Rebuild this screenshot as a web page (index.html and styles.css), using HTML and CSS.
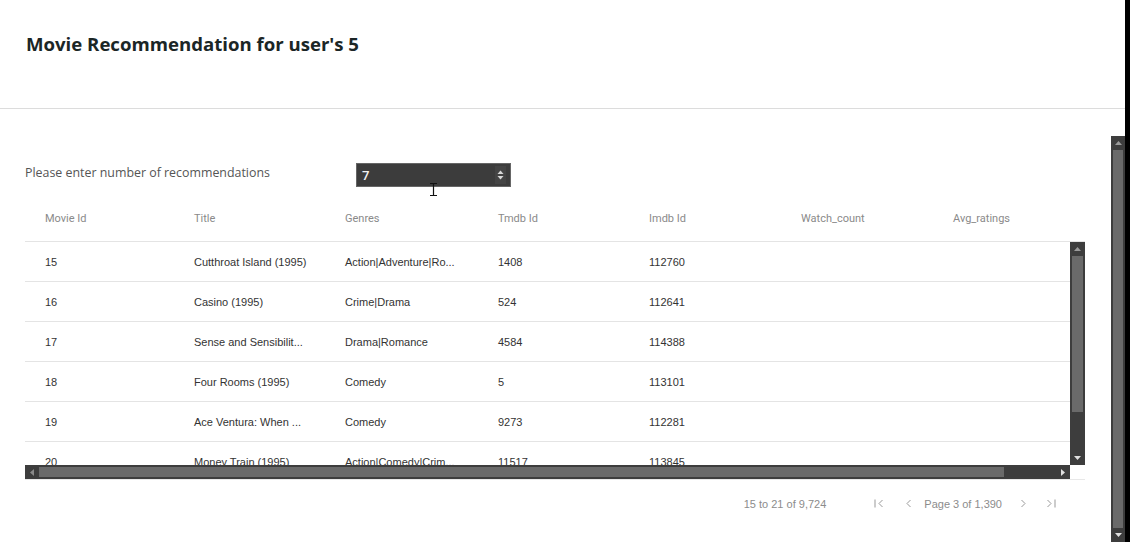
FILE: index.html
```html
<!DOCTYPE html>
<html>
<head>
<meta charset="utf-8">
<link rel="stylesheet" href="styles.css">
</head>
<body>
<div class="window">
  <div class="main">
    <header class="page-head">
      <h1 class="title">Movie Recommendation for user's 5</h1>
    </header>
    <div class="content-wrap">
      <div class="content">
        <div class="form-row">
          <label class="form-label">Please enter number of recommendations</label>
          <div class="num-input">
            <span class="num-value">7</span>
            <span class="spin">
              <svg width="7" height="12" viewBox="0 0 7 12"><path d="M3.5 1.5 L6.5 5 H0.5 Z" fill="#d8d8d8"/><path d="M3.5 10.5 L6.5 7 H0.5 Z" fill="#d8d8d8"/></svg>
            </span>
            <svg class="ibeam" width="9" height="15" viewBox="0 0 9 15"><path d="M1 1.5 H8 M4.5 1.5 V13.5 M1 13.5 H8" stroke="#111" stroke-width="1.2" fill="none"/></svg>
          </div>
        </div>

        <div class="grid">
          <div class="grid-head">
            <div class="hcell">Movie Id</div>
            <div class="hcell">Title</div>
            <div class="hcell">Genres</div>
            <div class="hcell">Tmdb Id</div>
            <div class="hcell">Imdb Id</div>
            <div class="hcell">Watch_count</div>
            <div class="hcell">Avg_ratings</div>
          </div>
          <div class="grid-body">
            <div class="viewport">
              <div class="rows">
                <div class="row"><div class="cell">15</div><div class="cell">Cutthroat Island (1995)</div><div class="cell">Action|Adventure|Ro...</div><div class="cell">1408</div><div class="cell">112760</div><div class="cell"></div><div class="cell"></div></div>
                <div class="row"><div class="cell">16</div><div class="cell">Casino (1995)</div><div class="cell">Crime|Drama</div><div class="cell">524</div><div class="cell">112641</div><div class="cell"></div><div class="cell"></div></div>
                <div class="row"><div class="cell">17</div><div class="cell">Sense and Sensibilit...</div><div class="cell">Drama|Romance</div><div class="cell">4584</div><div class="cell">114388</div><div class="cell"></div><div class="cell"></div></div>
                <div class="row"><div class="cell">18</div><div class="cell">Four Rooms (1995)</div><div class="cell">Comedy</div><div class="cell">5</div><div class="cell">113101</div><div class="cell"></div><div class="cell"></div></div>
                <div class="row"><div class="cell">19</div><div class="cell">Ace Ventura: When ...</div><div class="cell">Comedy</div><div class="cell">9273</div><div class="cell">112281</div><div class="cell"></div><div class="cell"></div></div>
                <div class="row"><div class="cell">20</div><div class="cell">Money Train (1995)</div><div class="cell">Action|Comedy|Crim...</div><div class="cell">11517</div><div class="cell">113845</div><div class="cell"></div><div class="cell"></div></div>
              </div>
              <div class="vscroll">
                <div class="sb-btn"><svg width="7" height="4" viewBox="0 0 7 4"><path d="M3.5 0 L7 4 H0 Z" fill="#9a9a9a"/></svg></div>
                <div class="vtrack"><div class="vthumb"></div></div>
                <div class="sb-btn"><svg width="7" height="4" viewBox="0 0 7 4"><path d="M0 0 H7 L3.5 4 Z" fill="#e0e0e0"/></svg></div>
              </div>
            </div>
            <div class="hbar-row">
              <div class="hscroll">
                <div class="sb-btn-h"><svg width="4" height="7" viewBox="0 0 4 7"><path d="M4 0 V7 L0 3.5 Z" fill="#8a8a8a"/></svg></div>
                <div class="htrack"><div class="hthumb"></div></div>
                <div class="sb-btn-h"><svg width="4" height="7" viewBox="0 0 4 7"><path d="M0 0 L4 3.5 L0 7 Z" fill="#e0e0e0"/></svg></div>
              </div>
              <div class="corner"></div>
            </div>
          </div>
          <div class="grid-foot">
            <span class="summary">15 to 21 of 9,724</span>
            <span class="pg-icon first"><svg width="10" height="9" viewBox="0 0 10 9"><path d="M1 0.5 V8.5 M8.5 1 L5 4.5 L8.5 8" stroke="#999" stroke-width="1" fill="none"/></svg></span>
            <span class="pg-icon prev"><svg width="6" height="9" viewBox="0 0 6 9"><path d="M4.5 1 L1 4.5 L4.5 8" stroke="#999" stroke-width="1" fill="none"/></svg></span>
            <span class="pg-text">Page 3 of 1,390</span>
            <span class="pg-icon next"><svg width="6" height="9" viewBox="0 0 6 9"><path d="M1.5 1 L5 4.5 L1.5 8" stroke="#999" stroke-width="1" fill="none"/></svg></span>
            <span class="pg-icon last"><svg width="10" height="9" viewBox="0 0 10 9"><path d="M1.5 1 L5 4.5 L1.5 8 M9 0.5 V8.5" stroke="#999" stroke-width="1" fill="none"/></svg></span>
          </div>
        </div>
      </div>
      <div class="page-scroll">
        <div class="sb-btn"><svg width="7" height="4" viewBox="0 0 7 4"><path d="M3.5 0 L7 4 H0 Z" fill="#9a9a9a"/></svg></div>
        <div class="vtrack"><div class="pthumb"></div></div>
        <div class="sb-btn"><svg width="7" height="4" viewBox="0 0 7 4"><path d="M0 0 H7 L3.5 4 Z" fill="#e0e0e0"/></svg></div>
      </div>
    </div>
  </div>
  <div class="edge"></div>
</div>
</body>
</html>
```

FILE: styles.css
```css
* { box-sizing: border-box; }

html, body {
  margin: 0;
  padding: 0;
  background: #fff;
}

.window {
  display: flex;
  width: 1130px;
  height: 542px;
  overflow: hidden;
}

.main {
  width: 1125px;
  display: flex;
  flex-direction: column;
}

.edge {
  width: 5px;
  background: #000;
}

.page-head {
  height: 109px;
  border-bottom: 1px solid #dcdcdc;
  padding: 31px 0 0 26px;
}

.title {
  margin: 0;
  font-family: "Open Sans", "Noto Sans", sans-serif;
  font-weight: 700;
  font-size: 18.6px;
  line-height: 26px;
  color: #1b2626;
}

.content-wrap {
  flex: 1;
  display: flex;
}

.content {
  flex: 1;
  padding: 54px 26px 0 25px;
}

.form-row {
  display: flex;
  align-items: center;
  height: 24px;
}

.form-label {
  width: 331px;
  font-family: "Open Sans", "Noto Sans", sans-serif;
  font-size: 12.4px;
  color: #555;
  margin-top: -6px;
}

.num-input {
  position: relative;
  width: 155px;
  height: 24px;
  background: #3c3c3c;
  border: 1px solid #666;
  display: flex;
  align-items: center;
  justify-content: space-between;
  padding: 0 4px 0 5px;
}

.num-value {
  font-family: "Open Sans", "Noto Sans", sans-serif;
  font-weight: 600;
  font-size: 13px;
  color: #f2f2f2;
}

.spin {
  width: 11px;
  height: 18px;
  display: flex;
  align-items: center;
  justify-content: center;
  background: #444;
}

.ibeam {
  position: absolute;
  left: 72px;
  top: 18px;
}

/* grid */
.grid {
  margin-top: 8px;
  width: 1060px;
  font-family: "Liberation Sans", Arial, sans-serif;
}

.grid-head {
  display: grid;
  grid-template-columns: 149px 151px 153px 151px 152px 152px 152px;
  height: 47px;
  border-bottom: 1px solid #e4e4e4;
  align-items: center;
}

.hcell {
  padding-left: 20px;
  font-family: Roboto, "Liberation Sans", sans-serif;
  font-size: 11px;
  color: #8a8a8a;
}

.grid-body {
  display: flex;
  flex-direction: column;
}

.viewport {
  display: flex;
  height: 223px;
}

.rows {
  flex: 1;
  overflow: hidden;
}

.row {
  display: grid;
  grid-template-columns: 149px 151px 153px 151px 152px 152px 152px;
  height: 40px;
  border-bottom: 1px solid #e4e4e4;
  align-items: center;
}

.cell {
  padding-left: 20px;
  font-size: 11px;
  color: #333;
  white-space: nowrap;
  padding-top: 1px;
}

.vscroll, .page-scroll {
  width: 15px;
  background: #3d3d3d;
  display: flex;
  flex-direction: column;
}

.page-scroll {
  width: 14px;
  margin-top: 27px;
}

.sb-btn {
  height: 14px;
  display: flex;
  align-items: center;
  justify-content: center;
  flex: none;
}

.vtrack {
  flex: 1;
  padding: 0 2px;
}

.vthumb {
  height: 156px;
  background: #6a6a6a;
}

.pthumb {
  height: 100%;
  background: #6a6a6a;
}

.hbar-row {
  display: flex;
  height: 14px;
}

.hscroll {
  flex: 1;
  display: flex;
  background: #3d3d3d;
}

.sb-btn-h {
  width: 14px;
  display: flex;
  align-items: center;
  justify-content: center;
  flex: none;
}

.htrack {
  flex: 1;
  padding: 2px 0;
}

.hthumb {
  width: 965px;
  height: 100%;
  background: #6a6a6a;
}

.corner {
  width: 15px;
  background: #fff;
}

.grid-foot {
  height: 48px;
  border-top: 1px solid #e8e8e8;
  display: flex;
  align-items: center;
  justify-content: flex-end;
  padding-right: 29px;
  font-size: 11px;
  color: #8c8c8c;
}

.summary {
  margin-right: 48px;
}

.pg-icon {
  display: flex;
  align-items: center;
}

.first { margin-right: 22px; }
.prev { margin-right: 12px; }
.pg-text { margin-right: 18px; }
.next { margin-right: 20px; }
```
